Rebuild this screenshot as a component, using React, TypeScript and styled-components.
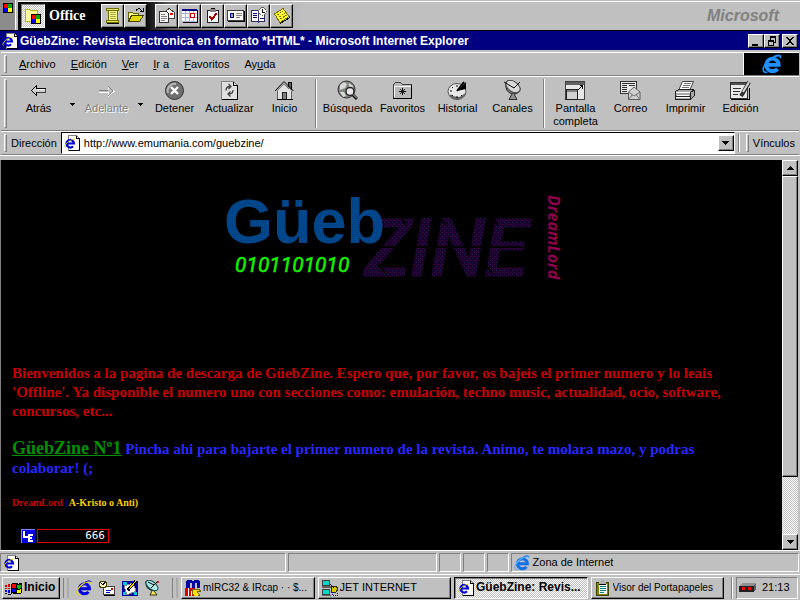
import React from 'react';
import styled, { createGlobalStyle, css } from 'styled-components';

const face = '#c0c0c0';
const shade = '#808080';
const navy = '#000080';

const raised = css`
  border: 1px solid;
  border-color: #fff #000 #000 #fff;
  box-shadow: inset -1px -1px 0 ${shade};
`;
const sunken = css`
  border: 1px solid;
  border-color: ${shade} #fff #fff ${shade};
`;
const dither = css`
  background: repeating-conic-gradient(#fff 0 25%, ${face} 0 50%) 0 0 / 2px 2px;
`;

const Global = createGlobalStyle`
  *, *::before, *::after { box-sizing: border-box; }
  body { margin: 0; background: ${face}; color: #000; font: 11px/13px "Liberation Sans", Arial, sans-serif; }
  button, input { font: inherit; color: inherit; margin: 0; padding: 0; border: 0; background: none; border-radius: 0; }
  svg { display: block; flex: none; }
`;

const Screen = styled.div`
  display: flex;
  flex-direction: column;
  min-height: 100vh;
  background: ${face};
`;

/* ---------- Office shortcut bar ---------- */

const OfficeBar = styled.header`
  display: flex;
  height: 31px;
  border-bottom: 1px solid #000;
  box-shadow: inset 0 1px 0 ${face}, inset 0 2px 0 #fff;
  background: ${face};
`;
const OfficeHandle = styled.div`
  width: 18px;
  padding: 3px;
  background: linear-gradient(90deg, #8c8c8c 15px, #fff 15px, #fff 16px, ${face} 16px);
`;
const OfficeTools = styled.nav`
  display: flex;
  align-items: center;
  flex: 1;
  padding-top: 2px;
  background: linear-gradient(90deg, #000 84px, #000 125px, #555 150px, #909090 200px, ${face} 285px) 0 2px no-repeat;
`;
const OfficeLogo = styled.button`
  ${sunken}
  ${dither}
  width: 24px;
  height: 24px;
  margin-left: 3px;
  display: grid;
  place-items: center;
`;
const OfficeName = styled.span`
  width: 56px;
  padding-left: 4px;
  color: #fff;
  font: bold 14px/24px "Liberation Serif", serif;
`;
const OfficeGroup = styled.div`
  display: flex;
  margin-right: 8px;
`;
const OfficeButton = styled.button`
  ${raised}
  width: 23px;
  height: 24px;
  background: ${face};
  display: grid;
  place-items: center;
`;
const Brand = styled.span`
  margin-left: auto;
  padding-right: 21px;
  color: ${shade};
  font: italic bold 16px/26px "Liberation Sans", Arial, sans-serif;
`;

/* ---------- Title bar ---------- */

const TitleBar = styled.div`
  display: flex;
  align-items: center;
  height: 19px;
  padding: 0 2px;
  background: ${navy};
  color: #fff;
`;
const Title = styled.h1`
  flex: 1;
  margin: 0;
  padding-left: 2px;
  font-size: 12px;
  line-height: 18px;
  white-space: nowrap;
`;
const WindowButton = styled.button<{ $apart?: boolean }>`
  ${raised}
  width: 16px;
  height: 14px;
  margin-left: ${p => (p.$apart ? 2 : 0)}px;
  background: ${face};
  display: grid;
  place-items: center;
`;

/* ---------- Bands ---------- */

const Bands = styled.div`
  padding: 2px 1px 0;
  border-bottom: 1px solid #fff;
`;
const Band = styled.div<{ $height: number }>`
  display: flex;
  align-items: stretch;
  height: ${p => p.$height}px;
  border-top: 1px solid #fff;
  border-bottom: 1px solid ${shade};
`;
const Grip = styled.div`
  width: 3px;
  margin: 2px 0 2px 3px;
  border: 1px solid;
  border-color: #fff ${shade} ${shade} #fff;
`;
const Menu = styled.nav`
  display: flex;
  gap: 15px;
  flex: 1;
  padding-left: 12px;
`;
const MenuItem = styled.button`
  white-space: nowrap;
`;
const Throbber = styled.div`
  width: 56px;
  border-left: 1px solid #fff;
  background: #000;
  display: grid;
  place-items: center;
`;
const Tools = styled.div`
  display: flex;
  padding-left: 4px;
`;
const Tool = styled.button`
  display: flex;
  flex-direction: column;
  align-items: center;
  width: 55px;
  padding-top: 3px;
  gap: 1px;

  &:disabled {
    color: ${shade};
    text-shadow: 1px 1px 0 #fff;
  }
`;
const ToolDrop = styled.button`
  width: 13px;
  height: 54px;
  display: grid;
  place-items: center;
`;
const Divider = styled.div`
  width: 2px;
  margin: 2px 3px;
  border-left: 1px solid ${shade};
  border-right: 1px solid #fff;
`;
const AddressLabel = styled.label`
  padding: 0 4px 0 4px;
  line-height: 22px;
`;
const AddressBox = styled.div`
  display: flex;
  align-items: center;
  flex: 1;
  min-width: 0;
  padding-left: 2px;
  border: 1px solid;
  border-color: #000 #fff #fff #000;
  background: #fff;
`;
const AddressInput = styled.input`
  flex: 1;
  min-width: 0;
  padding-left: 4px;
  outline: 0;
`;
const SquareButton = styled.button`
  ${raised}
  width: 16px;
  height: 16px;
  background: ${face};
  display: grid;
  place-items: center;
`;
const LinksButton = styled.button`
  padding: 0 4px 0 4px;
`;

/* ---------- Page ---------- */

const Viewport = styled.div`
  display: flex;
  flex: 1;
  margin: 4px 2px 0 0;
  border-left: 1px solid ${shade};
  background: #000;
`;
const Page = styled.main`
  flex: 1;
  min-width: 0;
  padding: 28px 32px 4px 11px;
  font: bold 15px/19px "Liberation Serif", "Times New Roman", serif;
`;
const LogoArea = styled.div`
  display: flex;
  justify-content: center;
  padding-left: 21px;
  margin-bottom: 76px;
`;
const Paragraph = styled.p<{ $color: string }>`
  margin: 0 0 19px;
  color: ${p => p.$color};
`;
const IssueLink = styled.a`
  color: #009000;
  font-size: 18px;
  line-height: 16px;
`;
const Signature = styled.p`
  margin: 0 0 20px;
  color: #c80000;
  font-size: 10px;
  line-height: 12px;
`;
const Tint = styled.span<{ $color: string }>`
  color: ${p => p.$color};
`;
const Counter = styled.div`
  display: flex;
  gap: 2px;
  padding-left: 9px;
`;
const CounterValue = styled.span`
  width: 72px;
  height: 14px;
  padding-right: 3px;
  border: 1px solid #e00000;
  color: #fff;
  font: 11px/12px "DejaVu Sans Mono", monospace;
  text-align: right;
`;
const ScrollBar = styled.div`
  ${dither}
  width: 16px;
  display: flex;
  flex-direction: column;
`;
const ScrollTrack = styled.div`
  flex: 1;
`;
const Thumb = styled.div`
  ${raised}
  height: 84%;
  background: ${face};
`;

/* ---------- Status bar ---------- */

const StatusBar = styled.footer`
  display: grid;
  grid-template-columns: 286fr 148fr 22px 22px 22px 288fr;
  gap: 2px;
  height: 24px;
  padding: 2px 1px 2px 0;
  border-top: 1px solid #fff;
`;
const Panel = styled.div`
  ${sunken}
  display: flex;
  align-items: center;
  gap: 3px;
  padding-left: 2px;
`;

/* ---------- Task bar ---------- */

const TaskBar = styled.footer`
  display: flex;
  align-items: center;
  height: 26px;
  padding: 0 2px;
  border-top: 1px solid #fff;
`;
const StartButton = styled.button`
  ${raised}
  display: flex;
  align-items: center;
  gap: 1px;
  width: 58px;
  height: 22px;
  padding-left: 2px;
  font-size: 12px;
  font-weight: bold;
`;
const TaskGrip = styled.div`
  width: 6px;
  height: 20px;
  margin: 0 3px;
  border-left: 1px solid ${shade};
  border-right: 2px outset #fff;
`;
const QuickLaunch = styled.div`
  display: flex;
  gap: 7px;
  padding: 0 8px 0 4px;
`;
const QuickButton = styled.button`
  width: 16px;
  height: 16px;
`;
const Tasks = styled.div`
  display: flex;
  flex: 1;
  min-width: 0;
  gap: 3px;
  padding-right: 7px;
`;
const Task = styled.button<{ $active?: boolean; $compact?: boolean }>`
  ${raised}
  display: flex;
  align-items: center;
  gap: 2px;
  flex: 1 1 0;
  min-width: 0;
  height: 22px;
  padding: 0 1px 0 3px;
  font-size: ${p => (p.$compact ? 10 : 11)}px;
  ${p =>
    p.$active &&
    css`
      ${dither}
      border-color: #000 #fff #fff #000;
      box-shadow: inset 1px 1px 0 ${shade};
      font-size: 12px;
      font-weight: bold;
    `}
`;
const TaskLabel = styled.span`
  overflow: hidden;
  text-overflow: ellipsis;
  white-space: nowrap;
`;
const Tray = styled.div`
  ${sunken}
  display: flex;
  align-items: center;
  gap: 6px;
  width: 62px;
  height: 22px;
  margin-left: 3px;
  padding-left: 2px;
`;
const TraySplit = styled.div`
  width: 2px;
  height: 22px;
  border-left: 1px solid ${shade};
  border-right: 1px solid #fff;
`;

/* ---------- Icons ---------- */

type IconProps = { w?: number; h?: number; box?: string; children: React.ReactNode; smooth?: boolean };
const Icon = ({ w = 16, h = 16, box, children, smooth }: IconProps) => (
  <svg width={w} height={h} viewBox={box ?? `0 0 ${w} ${h}`} fill="none" aria-hidden="true"
    shapeRendering={smooth ? 'auto' : 'crispEdges'}>
    {children}
  </svg>
);

const Explorer = ({ size = 16, color = '#0000e0', orbit = '#e8d800' }) => (
  <Icon w={size} h={size} box="0 0 16 16" smooth>
    <path d="M3.600 8.700h9.800a5 5 0 1 0-1 3.100" stroke={color} strokeWidth="3" />
    <path d="M4.200 14.600C-.8 15.600.2 9.500 5.600 5 10 1.300 15 0 14.800 3.400" stroke={orbit} strokeWidth="1.300" />
    <path d="M9 2.200c3-1.700 5.700-1.900 6.200-.2" stroke={color} strokeWidth="1" />
  </Icon>
);

const PageIcon = () => (
  <Icon>
    <path d="M4.500.5h8l3 3v12h-11z" fill="#fff" stroke={shade} />
    <path d="M12.500.5v3h3v12h-11" stroke="#000" />
    <path d="M2.500 8.500h7.500a3.800 3.800 0 1 0-1 2.800" stroke="#0000d8" strokeWidth="2.200" shapeRendering="auto" />
    <path d="M1.500 12.500C-1 11.500 4 5 10.500 4" stroke="#d8c800" shapeRendering="auto" />
  </Icon>
);

const Flag = ({ x = 0, y = 0 }) => (
  <g transform={`translate(${x} ${y})`}>
    <path d="M0 0h10v10H0z" fill="#000" />
    <path d="M1 1h4v4H1z" fill="#f00" />
    <path d="M5 1h4v4H5z" fill="#0a0" />
    <path d="M1 5h4v4H1z" fill="#00f" />
    <path d="M5 5h4v4H5z" fill="#ff0" />
  </g>
);

const Down = () => (
  <Icon w={7} h={4}><path d="M0 0h7v1H0zM1 1h5v1H1zM2 2h3v1H2zM3 3h1v1H3z" fill="#000" /></Icon>
);
const SmallDown = () => (
  <Icon w={5} h={3}><path d="M0 0h5v1H0zM1 1h3v1H1zM2 2h1v1H2z" fill="#000" /></Icon>
);
const Up = () => (
  <Icon w={7} h={4}><path d="M3 0h1v1H3zM2 1h3v1H2zM1 2h5v1H1zM0 3h7v1H0z" fill="#000" /></Icon>
);

const officeLeft = [
  { name: 'Nuevo documento', art: <>
    <path d="M4 2h9v13H4z" fill="#ffffa0" />
    <path d="M2.500 1.500h12v2h-12zM2.500 13.500h12v2h-12z" fill="#e8e060" stroke="#707000" />
    <path d="M4.500 4v9M13.500 4v9" stroke="#707000" />
    <path d="M6 5.500h6M6 7.500h6M6 9.500h6M6 11.500h6" stroke="#a8a830" />
    <path d="M3 16.500h12" stroke="#000" /></> },
  { name: 'Abrir documento', art: <>
    <path d="M1.500 14.500v-9h4l1 1h5v3" fill="#ffff80" stroke="#606000" />
    <path d="M1.500 14.500l3-6h12l-4 6z" fill="#e0d800" stroke="#404000" />
    <path d="M9 3.500c2-3 5-2 5.500 1M12.500 4.500h4M16.500 1v3.500" stroke="#000" /></> },
];
const officeRight = [
  { name: 'Enviar mensaje', art: <>
    <path d="M6.500 5.500l4.500-4 5.500 4v6h-10z" fill="#fff" stroke="#404040" />
    <path d="M12 6h3v2h-3z" fill="#d00" />
    <path d="M1.500 4.500h7l2 2v9h-9z" fill="#fff" stroke="#303030" />
    <path d="M3 7.500h4M3 9.500h6M3 11.500h6M3 13.500h4" stroke={shade} /></> },
  { name: 'Nueva cita', art: <>
    <path d="M1 2h15v13H1z" fill="#fff" /><path d="M1 2h15v2H1z" fill={navy} />
    <path d="M4.500 4v10M8.500 4v10M12.500 4v10M1 6.500h15M1 10.500h15M1 14.500h15" stroke="#b0b0e0" />
    <path d="M9.500 6.500h4v4h-4z" fill="#fff" stroke="#c00000" /><path d="M16.500 3v12.500H2" stroke="#000" /></> },
  { name: 'Nueva tarea', art: <>
    <path d="M3.500 3.500h11v12h-11z" fill="#fff" stroke="#202020" />
    <path d="M6 2h6v3H6z" fill={shade} /><path d="M7 1h4v1H7z" fill="#000" />
    <path d="M5.500 9l2.500 3.500 4.500-6" stroke="#a00000" strokeWidth="2" /></> },
  { name: 'Nuevo contacto', art: <>
    <path d="M.5 3.500h16v10H.5z" fill="#fff" stroke="#404040" /><path d="M1 14.500h16V4" stroke="#000" />
    <path d="M3.500 6.500h3v4h-3z" fill="#a0a0a0" stroke={navy} /><path d="M9 6.500h6M9 8.500h6M9 10.500h4" stroke="#808080" /></> },
  { name: 'Nuevo diario', art: <>
    <path d="M1.500 3.500h6l1 1v11l-1-1h-6zM8.500 4.500l1-1h5v11h-5l-1 1" fill="#fff" stroke="#303060" />
    <path d="M3 6.500h4M3 8.500h4M3 10.500h4M10 11.500h4" stroke={navy} />
    <circle cx="12.500" cy="4.500" r="3.700" fill="#fff" stroke="#606060" /><path d="M12.500 2v3h2" stroke="#000" /></> },
  { name: 'Nueva nota', art: <>
    <path d="M1.500 7L10 1.500l6 8L7 15.500z" fill="#ffff30" stroke="#707000" />
    <path d="M4 8l6-4M6 10l6-4M7.500 12l6-4" stroke="#807000" strokeDasharray="2 1" />
    <path d="M7 16.500l10-6" stroke="#000" /></> },
];

const toolArt: Record<string, React.ReactNode> = {
  back: <><path d="M3.500 10.500l5-5v3h9v4h-9v3z" fill="#d0d0d0" stroke="#000" /><path d="M8.500 12.500h9v-4" stroke="#404040" /><path d="M9 9.500h8" stroke="#fff" /></>,
  forward: <><path d="M3 12.500h9v4l6-5-6-5v3" stroke="#fff" /><path d="M2.500 10.500h9M12 6l5 5-5 5" stroke={shade} /></>,
  stop: <g shapeRendering="auto"><circle cx="10.500" cy="10.500" r="9" fill="#707070" stroke="#303030" /><path d="M4 13a7 7 0 0 1 8-9" stroke="#b8b8b8" strokeWidth="2" /><path d="M7 7l7 7M14 7l-7 7" stroke="#fff" strokeWidth="2.400" /></g>,
  refresh: <><path d="M2.500 1.500h12l4 4v14h-16z" fill="#e0e0e0" stroke={shade} /><path d="M14.500 1.500v4h4v14h-16" stroke="#000" /><path d="M7 10.500c0-3 1-4 4-4M9.500 4l2.500 2.500L9.500 9M14 10c0 3-1 4-4 4M11.500 16.500L9 14l2.500-2.500" stroke="#404040" shapeRendering="auto" strokeWidth="1.300" /></>,
  home: <><path d="M14 2h3v7h-3z" fill="#606060" stroke="#000" /><path d="M3.500 10.500L10 4l7.500 6.500v9h-14z" fill="#e0e0e0" stroke="#606060" /><path d="M1 11L10 1.500 19.500 11" stroke="#000" shapeRendering="auto" /><path d="M2.500 11L10 3.500l8 7.500" stroke="#a0a0a0" shapeRendering="auto" /><path d="M8.500 12.500h4v7h-4z" fill={shade} stroke="#202020" /><path d="M3 19.500h16" stroke="#000" /></>,
  search: <g shapeRendering="auto"><circle cx="9.500" cy="9.500" r="8.500" fill="#808880" stroke="#303030" /><path d="M3 5l4-3 3 2-2 4-5 2zM12 3l4 3-1 4-3-1zM3 12l4 0 2 4-3 1z" fill="#d8d8d8" /><circle cx="13" cy="11.500" r="4" fill="#e8e8e8" stroke="#202020" strokeWidth="1.400" /><path d="M16 15l4 4" stroke="#000" strokeWidth="3" /><path d="M16 14.500l4 4" stroke="#ddd" /></g>,
  favorites: <><path d="M1.500 18.500v-14l2-2h5l2 2h9v14z" fill="#b8b8b8" stroke="#404040" /><path d="M2.500 17V6.500H19" stroke="#fff" /><path d="M1 18.500h18.500V5" stroke="#000" /><path d="M10.500 8v7M7 11.500h7" stroke="#000" /><path d="M8 9l5 5M13 9l-5 5" stroke="#303030" shapeRendering="auto" /></>,
  history: <g shapeRendering="auto"><ellipse cx="10" cy="11.500" rx="9" ry="8" fill="#e8e8e8" stroke="#505050" /><path d="M3 15a9 8 0 0 0 15-1" stroke="#606060" strokeWidth="2" /><path d="M10 11L19 2v7z" fill="#000" /><path d="M10 11L17 2" stroke="#000" strokeWidth="2" /><path d="M10 5v2M3 11h2M10 16v2M5 7l1 1M5 16l1-1M15 16l-1-1" stroke="#000" /></g>,
  channels: <g shapeRendering="auto"><path d="M4 3c-1 6 2 11 8 11 4 0 6-3 6-6z" fill="#808080" stroke="#202020" /><ellipse cx="11" cy="6.500" rx="8" ry="5" transform="rotate(35 11 6.500)" fill="#d8d8d8" stroke="#404040" /><path d="M2 2l10 6L18 2" stroke="#000" /><path d="M10 14l-3 5.500h8L12 14" fill="#909090" stroke="#303030" /></g>,
  full: <><path d="M.5 1.500h19v18H.5z" fill="#e8e8e8" stroke="#404040" /><path d="M1 2h18v3H1z" fill="#606060" /><path d="M1.500 9.500h11v10h-11z" fill="#d0d0d0" stroke="#202020" /><path d="M2 10h10v2H2z" fill={shade} /><path d="M13 10l5-5M14.500 5.500h3v3" stroke="#000" /></>,
  mail: <><path d="M.5 1.500h16v12H.5z" fill="#e8e8e8" stroke="#303030" /><path d="M2 3.500h13M2 5.500h5M9 5.500h6M2 7.500h5M2 9.500h5M2 11.500h5" stroke="#303030" /><path d="M8.500 12l5.500-5 6 5v7.500H8.500z" fill="#d0d0d0" stroke="#606060" shapeRendering="auto" /><path d="M8.500 12l5.500 4 6-4M8.500 19.500l4-5M20 19.500l-4-5" stroke="#707070" shapeRendering="auto" /></>,
  print: <><path d="M7.500 1.500h11l-4 9h-11z" fill="#fff" stroke="#404040" shapeRendering="auto" /><path d="M9 3.500h7M8 5.500h7M7 7.500h7" stroke="#707070" /><path d="M.5 11.500l3-2h15l1 1v5l-4 4H.5z" fill="#a8a8a8" stroke="#202020" /><path d="M1 12.500h14M2 15.500h12M1 17.500h14" stroke="#fff" /><path d="M15.500 12v7M1 16.500h14M16 12l3-2" stroke="#202020" /></>,
  edit: <><path d="M.5 2.500h17v16H.5z" fill="#e8e8e8" stroke="#303030" /><path d="M1 3h16v2H1z" fill="#505050" /><path d="M3 8.500h8M3 11.500h7M3 14.500h5" stroke="#303030" /><path d="M1 19.500h18V8" stroke="#000" /><path d="M19 2l-6 11-2 3" stroke="#303030" strokeWidth="4" shapeRendering="auto" /><path d="M19 2l-6 10" stroke="#d8d8d8" strokeWidth="2" shapeRendering="auto" /></>,
};
const ToolIcon = ({ name }: { name: string }) => <Icon w={21} h={21}>{toolArt[name]}</Icon>;

const WindowsLogo = () => (
  <Icon w={18} h={16}>
    <path d="M6 4c3-3 5 1 11-1v10c-6 3-8-1-11 1z" fill="#000" />
    <path d="M7 4.500c2-1.500 3 0 4 0v3.500c-1 0-2-1-4 0z" fill="#f00" />
    <path d="M12 5c1 .5 3 .5 4-.3V8c-1 .8-3 .8-4 .3z" fill="#0b0" />
    <path d="M7 9c2-1 3 0 4 0v3.500c-1 0-2-1-4 0z" fill="#00f" />
    <path d="M12 9.500c1 .5 3 .5 4-.3v3.300c-1 .8-3 .8-4 .3z" fill="#ff0" />
    <path d="M0 5h2v2H0zM3 4h2v3H3zM0 8h2v1H0zM3 8h2v1H3z" fill="#d00" />
    <path d="M0 10h2v2H0zM3 10h2v3H3z" fill="#00d" />
    <path d="M0 13h2v1H0zM3 14h3v1H3z" fill="#000" />
  </Icon>
);
const MailClock = () => (
  <Icon>
    <path d="M4.500 6.500h11v8h-11z" fill="#fff" stroke="#404040" /><path d="M5 15.500h11V7" stroke="#000" />
    <path d="M7 10.500h5M7 12.500h4" stroke="#0000c0" /><path d="M12 8h2v2h-2z" fill="#d00" />
    <circle cx="4" cy="4.500" r="3.500" fill="#fff8c0" stroke="#404000" /><path d="M2 3l2 2 2-3" stroke="#000" />
  </Icon>
);
const Desktop = () => (
  <Icon>
    <path d="M0 1h16v15H0z" fill="#0000a0" /><path d="M1 2h4v3H1zM1 12h3v3H1zM12 12h3v3h-3z" fill="#00c8d8" />
    <path d="M2 6l9-3 3 8-9 4z" fill="#fff" stroke="#808080" />
    <path d="M14 1L6 10" stroke="#000" strokeWidth="3" /><path d="M14 1L7 9" stroke="#ffd800" /><path d="M5 9l2 2" stroke="#000" />
  </Icon>
);
const Dish = () => (
  <Icon smooth>
    <path d="M1 1c-1 7 4 11 11 9z" fill="#008080" stroke="#002828" /><ellipse cx="7" cy="5.500" rx="7" ry="3.800" transform="rotate(38 7 5.500)" fill="#a8e8e8" stroke="#204848" />
    <path d="M3 2l6 3 4-4M9 5l-3 3" stroke="#000" /><path d="M7 11l-2 4h7l-3-4" fill="#ffe860" stroke="#303000" /><circle cx="13" cy="2" r="1" fill="#d00" />
  </Icon>
);
const Mirc = () => (
  <Icon>
    <path d="M1 8V1l2-1h3l2 1 2-1h3l2 1v7h-3V3h-2v5H7V3H5v5z" fill="#0000a0" />
    <path d="M0 8h10v8H0z" fill="#e00000" /><path d="M3.500 8v8M6 11.500h4M6.500 12v4" stroke="#fff" />
    <path d="M8 9h5l3 2-4 1 3 3-2 1H9l-2-3z" fill="#ffe000" stroke="#706000" />
  </Icon>
);
const Jet = () => (
  <Icon>
    <path d="M.5.5h7v5h-7zM.5 9.500h7v5h-7z" fill="#00d8c8" stroke="#404040" /><path d="M0 7h9M0 15.500h9" stroke="#606060" strokeWidth="2" />
    <path d="M9 6h5l2 3-2 3H9z" fill="#d8c800" stroke="#303000" /><path d="M8 4l4 4" stroke="#000" /><path d="M10.500 12v3.500h5V12" stroke="#0000c0" strokeDasharray="1 1" />
  </Icon>
);
const Clipboard = () => (
  <Icon>
    <path d="M1.500 2.500h12v13h-12z" fill="#808000" stroke="#404000" /><path d="M4 4h8v10H4z" fill="#fff" />
    <path d="M5 6.500h6M5 8.500h6M5 10.500h6M5 12.500h4" stroke="#008080" /><path d="M4 2h7v2H4zM6 0h3v2H6z" fill="#b0b0b0" /><path d="M4 4.500h7" stroke="#000" />
  </Icon>
);
const Modem = () => (
  <Icon w={17}>
    <path d="M0 6l3-3h14l-2 3z" fill="#909090" /><path d="M15 6l2-3v6l-2 3z" fill="#606060" /><path d="M0 6h15v6H0z" fill="#202020" />
    <path d="M3 7h3v3H3zM9 7h3v3H9z" fill="#f00" />
  </Icon>
);

/* ---------- Magazine logo ---------- */

const MagazineLogo = () => (
  <svg width="340" height="100" viewBox="0 0 340 100" overflow="visible" role="img" aria-label="GüebZine">
    <defs>
      <pattern id="weave" width="2" height="2" patternUnits="userSpaceOnUse">
        <path d="M0 0h2v2H0z" fill="#004890" /><path d="M0 0h1v1H0z" fill="#004080" />
      </pattern>
      <pattern id="dots" width="4" height="4" patternUnits="userSpaceOnUse">
        <path d="M0 0h4v4H0z" fill="#1c0030" /><path d="M0 0h1v1H0z" fill="#401040" /><path d="M2 2h1v1H2z" fill="#182840" />
      </pattern>
    </defs>
    <text x="143" y="87" fill="url(#dots)" stroke="url(#dots)" strokeWidth="3" fontFamily="Roboto, sans-serif" fontStyle="italic" fontWeight="normal" fontSize="78">ZINE</text>
    <path d="M145 59h155M178 27l6 10M156 76l8 10M216 27l8 10M268 27l8 10M263 76l8 10" stroke="#000" strokeWidth="2" />
    <text x="2" y="55" fill="url(#weave)" fontFamily="Liberation Sans, Arial, sans-serif" fontWeight="bold" fontSize="63">Güeb</text>
    <text x="13" y="84" fill="#18f000" stroke="#18f000" strokeWidth="0.500" fontFamily="Roboto, sans-serif" fontStyle="italic" fontWeight="normal" fontSize="21">0101101010</text>
    <text transform="translate(326 7) rotate(90)" fill="#90004c" fontFamily="Open Sans, sans-serif" fontStyle="italic" fontWeight="bold" fontSize="16">DreamLord</text>
  </svg>
);

/* ---------- Data ---------- */

const menus = [['', 'A', 'rchivo'], ['', 'E', 'dición'], ['', 'V', 'er'], ['', 'I', 'r a'], ['', 'F', 'avoritos'], ['Ay', 'u', 'da']];
const toolGroups = [
  [
    { icon: 'back', label: 'Atrás', drop: true },
    { icon: 'forward', label: 'Adelante', drop: true, disabled: true },
    { icon: 'stop', label: 'Detener' },
    { icon: 'refresh', label: 'Actualizar' },
    { icon: 'home', label: 'Inicio' },
  ],
  [
    { icon: 'search', label: 'Búsqueda' },
    { icon: 'favorites', label: 'Favoritos' },
    { icon: 'history', label: 'Historial' },
    { icon: 'channels', label: 'Canales' },
  ],
  [
    { icon: 'full', label: 'Pantalla completa' },
    { icon: 'mail', label: 'Correo' },
    { icon: 'print', label: 'Imprimir' },
    { icon: 'edit', label: 'Edición' },
  ],
] as { icon: string; label: string; drop?: boolean; disabled?: boolean }[][];
const tasks = [
  { label: 'mIRC32 & IRcap · · $...', icon: <Mirc />, compact: true },
  { label: 'JET INTERNET', icon: <Jet /> },
  { label: 'GüebZine: Revis...', icon: <PageIcon />, active: true },
  { label: 'Visor del Portapapeles', icon: <Clipboard />, compact: true },
];

export default function App() {
  return (
    <Screen>
      <Global />
      <OfficeBar>
        <OfficeHandle><Icon w={10} h={10}><Flag /></Icon></OfficeHandle>
        <OfficeTools>
          <OfficeLogo aria-label="Menú de Office">
            <Icon w={20} h={20}>
              <path d="M2.500 15.500v-12h4l1 1h7v11z" fill="#ffffa0" stroke="#c0b000" />
              <Flag x={8} y={8} />
            </Icon>
          </OfficeLogo>
          <OfficeName>Office</OfficeName>
          {[officeLeft, officeRight].map((group, i) => (
            <OfficeGroup key={i}>
              {group.map(b => (
                <OfficeButton key={b.name} aria-label={b.name}><Icon w={18} h={18}>{b.art}</Icon></OfficeButton>
              ))}
            </OfficeGroup>
          ))}
          <Brand>Microsoft</Brand>
        </OfficeTools>
      </OfficeBar>

      <TitleBar>
        <PageIcon />
        <Title>GüebZine: Revista Electronica en formato *HTML* - Microsoft Internet Explorer</Title>
        <WindowButton aria-label="Minimizar"><Icon w={10} h={10}><path d="M1 8h6v2H1z" fill="#000" /></Icon></WindowButton>
        <WindowButton aria-label="Restaurar">
          <Icon w={10} h={10}><path d="M3 0h6v2H3zM1 4h6v2H1z" fill="#000" /><path d="M3.500 1v3M8.500 1v5.500H7M1.500 4v5.500h5V4" stroke="#000" /></Icon>
        </WindowButton>
        <WindowButton $apart aria-label="Cerrar">
          <Icon w={10} h={10}><path d="M1 1h2v1h1v1h2V2h1V1h2v1H8v1H7v1H6v2h1v1h1v1h1v1H7V8H6V7H4v1H3v1H1V8h1V7h1V6h1V4H3V3H2V2H1z" fill="#000" /></Icon>
        </WindowButton>
      </TitleBar>

      <Bands>
        <Band $height={24}>
          <Grip />
          <Menu>
            {menus.map(([before, key, after]) => (
              <MenuItem key={key}>{before}<u>{key}</u>{after}</MenuItem>
            ))}
          </Menu>
          <Throbber><Explorer size={20} color="#2090ff" orbit="#2090ff" /></Throbber>
        </Band>
        <Band $height={55}>
          <Grip />
          <Tools>
            {toolGroups.map((group, i) => (
              <React.Fragment key={i}>
                {i > 0 && <Divider />}
                {group.map(t => (
                  <React.Fragment key={t.label}>
                    <Tool disabled={t.disabled}><ToolIcon name={t.icon} />{t.label}</Tool>
                    {t.drop && <ToolDrop aria-label={`Historial: ${t.label}`}><SmallDown /></ToolDrop>}
                  </React.Fragment>
                ))}
              </React.Fragment>
            ))}
          </Tools>
        </Band>
        <Band $height={24}>
          <Grip />
          <AddressLabel htmlFor="address">Dirección</AddressLabel>
          <AddressBox>
            <PageIcon />
            <AddressInput id="address" defaultValue="http://www.emumania.com/guebzine/" />
            <SquareButton aria-label="Mostrar direcciones"><Down /></SquareButton>
          </AddressBox>
          <Divider />
          <Grip />
          <LinksButton>Vínculos</LinksButton>
        </Band>
      </Bands>

      <Viewport>
        <Page>
          <LogoArea><MagazineLogo /></LogoArea>
          <Paragraph $color="#c80000">
            Bienvenidos a la pagina de descarga de GüebZine. Espero que, por favor, os bajeis el primer numero y lo leais
            'Offline'. Ya disponible el numero uno con secciones como: emulación, techno music, actualidad, ocio, software,
            concursos, etc...
          </Paragraph>
          <Paragraph $color="#2828ff">
            <IssueLink href="#numero-1">GüebZine Nº1</IssueLink> Pincha ahi para bajarte el primer numero de la revista.
            Animo, te molara mazo, y podras colaborar! (;
          </Paragraph>
          <Signature>
            DreamLord <Tint $color="#000080">(</Tint><Tint $color="#ffcc00">A-Kristo o Anti)</Tint>
          </Signature>
          <Counter>
            <Icon w={14} h={14}>
              <path d="M0 0h14v14H0z" fill="#0000e0" /><path d="M0 13.500V.5h14" stroke="#8080ff" />
              <path d="M3 2v6h4M12 5.500H8v6h4M8 8.500h3" stroke="#fff" strokeWidth="2" />
            </Icon>
            <CounterValue>666</CounterValue>
          </Counter>
        </Page>
        <ScrollBar>
          <SquareButton aria-label="Subir"><Up /></SquareButton>
          <ScrollTrack><Thumb /></ScrollTrack>
          <SquareButton aria-label="Bajar"><Down /></SquareButton>
        </ScrollBar>
      </Viewport>

      <StatusBar>
        <Panel><PageIcon /></Panel>
        <Panel /><Panel /><Panel /><Panel />
        <Panel><Explorer color="#1070e8" orbit="#60b8ff" />Zona de Internet</Panel>
      </StatusBar>

      <TaskBar>
        <StartButton><WindowsLogo />Inicio</StartButton>
        <TaskGrip />
        <QuickLaunch>
          <QuickButton aria-label="Internet Explorer"><Explorer /></QuickButton>
          <QuickButton aria-label="Outlook Express"><MailClock /></QuickButton>
          <QuickButton aria-label="Escritorio"><Desktop /></QuickButton>
          <QuickButton aria-label="Canales"><Dish /></QuickButton>
        </QuickLaunch>
        <TaskGrip />
        <Tasks>
          {tasks.map(t => (
            <Task key={t.label} $active={t.active} $compact={t.compact}>{t.icon}<TaskLabel>{t.label}</TaskLabel></Task>
          ))}
        </Tasks>
        <TraySplit />
        <Tray><Modem />21:13</Tray>
      </TaskBar>
    </Screen>
  );
}
